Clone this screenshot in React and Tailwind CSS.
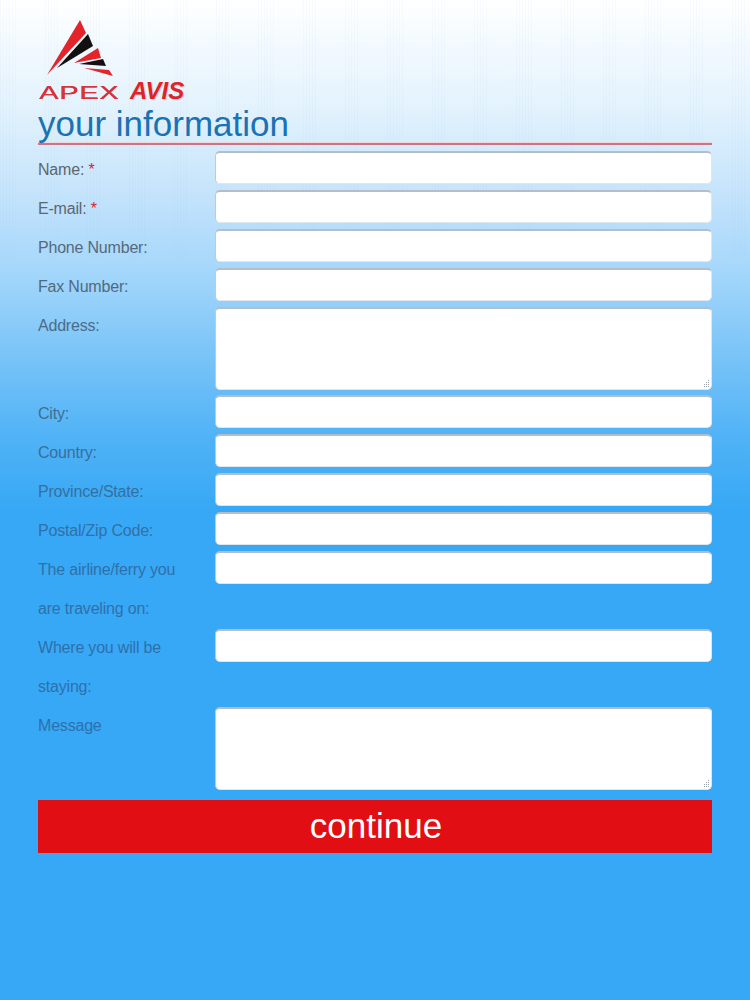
const FIELDS = [
  { label: 'Name:', required: true, color: 'text-[#5b6670]' },
  { label: 'E-mail:', required: true, color: 'text-[#5a6772]' },
  { label: 'Phone Number:', color: 'text-[#556a7c]' },
  { label: 'Fax Number:', color: 'text-[#4f6a80]' },
  { label: 'Address:', area: true, color: 'text-[#4a6c88]' },
  { label: 'City:', color: 'text-[#3f6d93]' },
  { label: 'Country:', color: 'text-[#3a6e9a]' },
  { label: 'Province/State:', color: 'text-[#356fa2]' },
  { label: 'Postal/Zip Code:', color: 'text-[#3170a8]' },
  { label: 'The airline/ferry you are traveling on:', tall: true, color: 'text-[#2f70ab]' },
  { label: 'Where you will be staying:', tall: true, color: 'text-[#2e70ac]' },
  { label: 'Message', area: true, color: 'text-[#2e70ac]' },
];

function Logo() {
  return (
    <div className="flex flex-col w-[150px]">
      <svg width="80" height="59" viewBox="39 19 80 59" className="block">
        <polygon points="81,20 87,33 48,75" fill="#e3242b" />
        <polygon points="89,34 94,46 58,68" fill="#111111" />
        <polygon points="99,48 102,58 75,63" fill="#e3242b" />
        <polygon points="104,59 107,66 80,64" fill="#111111" />
        <polygon points="85,68 110,70 114,76" fill="#e3242b" />
      </svg>
      <div className="flex items-baseline h-[24px] mt-[1px] ml-[1px]">
        <span className="w-[91px] text-[19px] leading-[24px] text-[#d8323a] origin-left scale-x-[1.52] tracking-[0.5px] [text-shadow:0.4px_0_0_#d8323a]">
          APEX
        </span>
        <span className="text-[24px] leading-[24px] font-bold italic text-[#e0222a] [text-shadow:1px_1px_1px_rgba(120,60,60,0.2)]">
          AVIS
        </span>
      </div>
    </div>
  );
}

function Field({ label, required, area, tall, color }) {
  return (
    <div className={`grid grid-cols-[177px_497px] ${tall ? 'h-[78px]' : ''}`}>
      <label className={`leading-[39px] w-[150px] -mt-[1px] ${color}`}>
        {label}
        {required && <span className="text-[#d8232a]"> *</span>}
      </label>
      {area ? (
        <div className="relative h-[83px] mb-[5px] rounded-[5px] bg-white border border-t-2 border-[#dfe6ec] border-t-[#b5bec6] border-l-[#c2cad1]">
          <svg width="9" height="9" viewBox="0 0 9 9" className="absolute right-[1px] bottom-[1px]">
            <path d="M7 1h1v1H7zM5 3h1v1H5zM7 3h1v1H7zM3 5h1v1H3zM5 5h1v1H5zM7 5h1v1H7zM3 7h1v1H3zM5 7h1v1H5zM7 7h1v1H7z" fill="#9aa3aa" />
          </svg>
        </div>
      ) : (
        <div className="h-[33px] mb-[6px] rounded-[5px] bg-white border border-t-2 border-[#dfe6ec] border-t-[#b5bec6] border-l-[#c2cad1]" />
      )}
    </div>
  );
}

export default function App() {
  return (
    <div className="relative w-[750px] h-[1000px] px-[38px] pt-[19px] font-['Liberation_Sans',Arial,sans-serif] bg-[linear-gradient(to_bottom,#ffffff_0px,#e2f2fd_110px,#c6e4fb_190px,#a5d7fb_270px,#7cc5f8_350px,#4fb2f6_440px,#37a8f5_510px,#37a8f5_1000px)]">
      <div className="absolute inset-x-0 top-0 h-[260px] bg-[linear-gradient(to_right,rgba(150,200,240,0.06)_1px,transparent_1px)] bg-[length:3px_100%] [mask-image:repeating-linear-gradient(to_right,black_0px,black_16px,transparent_16px,transparent_43px)]" />
      <div className="relative">
        <Logo />
        <h1 className="text-[35px] leading-[40px] mt-[1px] text-[#1a72b5] font-normal">your information</h1>
        <div className="h-[2px] w-[674px] -mt-[1px] mb-[6px] bg-[#c87585] shadow-[0_-1px_0_#f3d6dc]" />
        <form className="text-[16px] tracking-[-0.2px]">
          {FIELDS.map((field) => (
            <Field key={field.label} {...field} />
          ))}
        </form>
        <button className="w-[674px] h-[53px] mt-[5px] pl-[2px] pb-[2px] bg-[#e10f13] text-white text-[35px] leading-[51px]">
          continue
        </button>
      </div>
    </div>
  );
}
